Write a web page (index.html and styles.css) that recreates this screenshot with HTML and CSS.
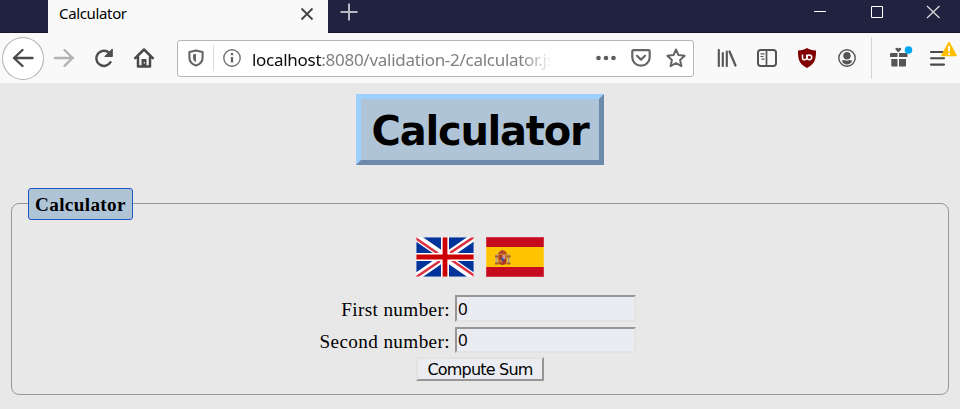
FILE: index.html
```
<!DOCTYPE html>
<html lang="en">
<head>
<meta charset="utf-8">
<title>Calculator</title>
<link rel="stylesheet" href="styles.css">
</head>
<body>
<header class="tabbar">
  <div class="tab">
    <span class="tab-title">Calculator</span>
    <svg class="tab-close" width="14" height="14" viewBox="0 0 14 14"><path d="M1.5 1.5l11 11M12.5 1.5l-11 11" stroke="#444" stroke-width="1.8"/></svg>
  </div>
  <svg class="new-tab" width="18" height="18" viewBox="0 0 18 18"><path d="M9 .5v17M.5 9h17" stroke="#b9b9c6" stroke-width="2"/></svg>
  <div class="window-controls">
    <svg width="57" height="33" viewBox="0 0 57 33"><path d="M22 11.5h12" stroke="#fff"/></svg>
    <svg width="57" height="33" viewBox="0 0 57 33"><path d="M22.500 6.500h11v11h-11z" fill="none" stroke="#fff"/></svg>
    <svg width="57" height="33" viewBox="0 0 57 33"><path d="M21 6l12.500 12M33.500 6L21 18" stroke="#ddd" stroke-width="1.200"/></svg>
  </div>
</header>
<nav class="toolbar">
  <div class="back"><svg width="22" height="20" viewBox="0 0 22 20"><path d="M20.500 10H2M10.500 2L2 10l8.500 8" fill="none" stroke="#4a4a4a" stroke-width="2.400" stroke-linecap="round" stroke-linejoin="round"/></svg></div>
  <div class="tool"><svg width="22" height="20" viewBox="0 0 22 20"><path d="M2 10h18M11.500 2l8 8-8 8" fill="none" stroke="#b3b3b3" stroke-width="2.400" stroke-linecap="round" stroke-linejoin="round"/></svg></div>
  <div class="tool"><svg width="20" height="20" viewBox="0 0 20 20"><path d="M16.500 14.200A7.600 7.600 0 1 1 15.200 4.800" fill="none" stroke="#4d4d4d" stroke-width="2.500" stroke-linecap="round"/><path d="M18.300 1v7.500h-7.500z" fill="#4d4d4d" stroke="#4d4d4d" stroke-linejoin="round"/></svg></div>
  <div class="tool"><svg width="20" height="20" viewBox="0 0 20 20"><path d="M1.200 10.200L10 1.500l8.800 8.700M4 9v9.500h12V9" fill="none" stroke="#4a4a4a" stroke-width="2.500" stroke-linecap="round" stroke-linejoin="round"/><path d="M7.500 11h5v8h-5z" fill="#4a4a4a"/><path d="M9.700 14h1.300v1.500H9.700z" fill="#ddd"/></svg></div>
  <div class="urlbar">
    <svg class="shield" width="16" height="18" viewBox="0 0 16 18"><path d="M8 1.400l6.600 1.700v5.400c0 4-2.800 6.800-6.600 8.100-3.800-1.300-6.600-4.100-6.600-8.100V3.100z" fill="none" stroke="#666" stroke-width="2.100" stroke-linejoin="round"/><path d="M8 4.700v8.600C5.700 12 5 10.500 5 8.500v-3z" fill="#666"/></svg>
    <span class="url-divider"></span>
    <svg class="info" width="18" height="18" viewBox="0 0 18 18"><circle cx="9" cy="9" r="8.200" fill="none" stroke="#737373" stroke-width="1.400"/><path d="M9 8v5.500" stroke="#666" stroke-width="2.300"/><circle cx="9" cy="5.100" r="1.300" fill="#666"/></svg>
    <span class="url"><span class="host">localhost</span>:8080/validation-2/calculator.js</span>
    <svg class="dots" width="20" height="6" viewBox="0 0 20 6"><g fill="#5d5d5d"><circle cx="2.500" cy="3" r="2.300"/><circle cx="10" cy="3" r="2.300"/><circle cx="17.500" cy="3" r="2.300"/></g></svg>
    <svg class="pocket" width="20" height="18" viewBox="0 0 20 18"><path d="M2.500 1.200h15q1.200 0 1.200 1.200v5.800a8.700 8.500 0 0 1-17.400 0V2.400q0-1.200 1.200-1.200z" fill="none" stroke="#666" stroke-width="2.200"/><path d="M6 6.800l4 3.800 4-3.800" fill="none" stroke="#666" stroke-width="2.200" stroke-linecap="round" stroke-linejoin="round"/></svg>
    <svg class="star" width="20" height="20" viewBox="0 0 20 20"><path d="M10 1.500l2.500 5.600 6.200.7-4.600 4.200 1.300 6.200-5.400-3.200-5.400 3.200L5.900 12 1.300 7.800l6.200-.7z" fill="none" stroke="#666" stroke-width="2" stroke-linejoin="round"/></svg>
  </div>
  <div class="actions">
    <div class="tool"><svg width="20" height="18" viewBox="0 0 20 18"><path d="M1.800 1v16M5.800 4v13M9.800 2.500V17" stroke="#555" stroke-width="2.100" stroke-linecap="round"/><path d="M12.500 2.500l6 14" stroke="#555" stroke-width="2.200" stroke-linecap="round"/></svg></div>
    <div class="tool"><svg width="20" height="18" viewBox="0 0 20 18"><rect x="1" y="1" width="18" height="16" rx="2.700" fill="none" stroke="#555" stroke-width="2"/><path d="M9.500 1v16" stroke="#555" stroke-width="1.700"/><path d="M3.500 4.800h4M3.500 7.500h3M4.500 10.200h3" stroke="#555" stroke-width="1.200"/></svg></div>
    <div class="tool"><svg width="18" height="20" viewBox="0 0 18 20"><path d="M9 0c2.500 1.800 5 2.200 9 2.500 0 8-.5 13.300-9 17.500C.5 15.800 0 10.500 0 2.500 4 2.200 6.500 1.800 9 0z" fill="#800000"/><path d="M4.500 6.500v3.200a2.100 2.100 0 0 0 4.200 0V6.500" fill="none" stroke="#fff" stroke-width="1.500"/><circle cx="11.300" cy="9.300" r="2.400" fill="none" stroke="#fff" stroke-width="1.500"/></svg></div>
    <div class="tool"><svg width="18" height="18" viewBox="0 0 18 18"><circle cx="9" cy="9" r="8.200" fill="none" stroke="#555" stroke-width="1.400"/><circle cx="9" cy="6.700" r="3.700" fill="#555"/><path d="M3.700 11.400c1 .2 1.900-.2 2.700-.5 1.700 1 3.500 1 5.200 0 .8.300 1.700.7 2.700.5-1 2.800-3 4-5.300 4s-4.300-1.200-5.300-4z" fill="#555"/></svg></div>
    <span class="separator"></span>
    <div class="tool gift"><svg width="24" height="22" viewBox="0 0 24 22"><path d="M1 8q0-1 1-1h6.500v4H1zM10 7h7q1.500 0 1.500 1v3H10zM2.300 13h6.200v7.500H3.300q-1 0-1-1zM10 13h7v6.500q0 1-1 1h-6z" fill="#555"/><path d="M9.300 6.500L6.500 3.400q-.5-1.700 1-1.700 1.300 0 1.800 1 .5-1 1.800-1 1.500 0 1 1.700z" fill="#555"/><circle cx="19.500" cy="4" r="3.800" fill="#00a7f5"/></svg></div>
    <div class="tool menu"><svg width="28" height="26" viewBox="0 0 28 26"><path d="M2 11h13M2 17.300h13M2 23.600h13" stroke="#4a4a4a" stroke-width="2.100" stroke-linecap="round"/><path d="M20 2l6.700 12.300H13.300z" fill="#ffbf00" stroke="#ffbf00" stroke-width="2" stroke-linejoin="round"/><path d="M20 5v5.500M20 12v2" stroke="#fff" stroke-width="1.800"/></svg></div>
  </div>
</nav>
<main class="page">
  <h1>Calculator</h1>
  <fieldset>
    <legend>Calculator</legend>
    <div class="flags">
      <svg width="58" height="40" viewBox="0 0 58 40"><path fill="#039" d="M0 0h58v40H0z"/><path d="M0 0l58 40M58 0L0 40" stroke="#fff" stroke-width="7.500"/><path d="M-1 .8L24 18M34 22l25 17.200M59-.8L34 16M24 24L-1 41" stroke="#dc3040" stroke-width="2.500"/><path d="M29 0v40M0 20h58" stroke="#fff" stroke-width="8"/><path d="M29 0v40M0 20h58" stroke="#c00" stroke-width="4.800"/><path d="M.5.5h57v39H.5z" fill="none" stroke="#fff" stroke-opacity=".4"/></svg>
      <svg width="58" height="40" viewBox="0 0 58 40"><path fill="#c60b1e" d="M0 0h58v40H0z"/><path fill="#ffc400" d="M0 10h58v20H0z"/><path d="M10.500 17v9M22.500 17v9" stroke="#b6a08a" stroke-width="2"/><path d="M9 19.500h3.500M21 19.500h3.500M9 26.500h4M20.500 26.500h4" stroke="#a3602a" stroke-width="1.800"/><path d="M12.500 18h8v6q0 4-4 4t-4-4z" fill="#aa3929"/><path d="M12 17.500q0-3 4.500-4.500 4.500 1.500 4.500 4.500z" fill="#b54829"/><path d="M16.500 18h3v4h-3z" fill="#c99aa0"/><path d="M13 23h3v3q-2-.5-3-2z" fill="#d9822b"/><circle cx="16.500" cy="22.500" r="1.500" fill="#385b9b"/><path d="M.5.5h57v39H.5z" fill="none" stroke="#fff" stroke-opacity=".18"/></svg>
    </div>
    <form class="form">
      <label for="first">First number:</label>
      <input id="first" class="first" type="text" value="0">
      <label for="second">Second number:</label>
      <input id="second" type="text" value="0">
    </form>
    <button type="button"><span>Compute Sum</span></button>
  </fieldset>
</main>
</body>
</html>
```
FILE: styles.css
```
* { box-sizing: border-box; }
html, body { height: 100%; }
body {
  margin: 0;
  background: #e8e8e8;
  color: #000;
  font-family: "Liberation Serif", serif;
  overflow: hidden;
}
svg { display: block; flex: none; }

.tabbar {
  display: flex;
  height: 33px;
  padding-left: 48px;
  background: #202340;
  border-bottom: 1px solid #15172e;
}
.tab {
  display: flex;
  align-items: flex-start;
  justify-content: space-between;
  width: 280px;
  height: 33px;
  padding: 4px 14px 0 11px;
  background: #f9f9f9;
}
.tab-title {
  font: 15px/18px "Noto Sans", sans-serif;
  letter-spacing: -0.35px;
}
.tab-close { margin-top: 3px; }
.new-tab { margin: 3px 0 0 12px; }
.window-controls { display: flex; margin-left: auto; margin-right: -3px; }

.toolbar {
  display: flex;
  align-items: center;
  height: 50px;
  padding-left: 2px;
  background: #f9f9f9;
}
.back {
  display: grid;
  place-items: center;
  width: 42px;
  height: 43px;
  border: 1px solid #b1b1b1;
  border-radius: 50%;
  background: #fff;
}
.tool {
  display: grid;
  place-items: center;
  flex: none;
  width: 40px;
  height: 40px;
}
.urlbar {
  display: flex;
  align-items: center;
  flex: none;
  width: 517px;
  height: 37px;
  margin-left: 13px;
  padding: 0 6px 0 10px;
  border: 1px solid #b5b5b5;
  border-radius: 3px;
  background: #fff;
}
.url-divider { width: 1px; height: 26px; margin: 0 9px 0 9px; background: #dcdcdc; }
.url {
  width: 300px;
  margin: 4px 0 0 11px;
  white-space: nowrap;
  color: #808080;
  font: 17px/24px "Noto Sans", sans-serif;
  letter-spacing: -0.28px;
  -webkit-mask-image: linear-gradient(to right, #000 270px, transparent 300px);
  mask-image: linear-gradient(to right, #000 270px, transparent 300px);
}
.host { color: #0c0c0d; }
.dots { margin-left: 44px; }
.pocket { margin-left: 15px; }
.star { margin-left: 15px; }
.actions { display: flex; align-items: center; margin-left: 13px; }
.separator { width: 1px; height: 42px; margin: 0 7px 0 4px; background: #d4d4d4; }
.gift svg { margin: -3px -3px 0 0; }
.menu svg { margin: -9px -7px 0 0; }

.page { display: flex; flex-direction: column; align-items: center; padding: 11px 11px 0; }
h1 {
  width: 248px;
  height: 71px;
  margin: 0;
  border: 5px solid;
  border-color: #9dcfff #6c8baa #6c8baa #9dcfff;
  background: #b0c4d8;
  font: bold 40px/64px "DejaVu Sans", sans-serif;
  letter-spacing: -1.25px;
  text-align: center;
}
fieldset {
  width: 938px;
  height: 207px;
  margin: 22.9px 0 0;
  padding: 0 16px;
  border: 1px solid #969696;
  border-radius: 8px;
}
legend {
  width: 105px;
  height: 32px;
  padding: 0 0 0 6px;
  border: 1px solid #1c59c6;
  border-radius: 3px;
  background: #b0c4d8;
  font-size: 19.2px;
  letter-spacing: 0.35px;
  font-weight: bold;
  line-height: 32px;
}
.flags { display: flex; justify-content: center; gap: 12px; padding-top: 17px; }
.form {
  display: grid;
  grid-template-columns: 131px 181px;
  column-gap: 5px;
  row-gap: 5px;
  justify-content: start;
  margin: 18px 0 0 291px;
}
label {
  height: 26px;
  font-size: 19.2px;
  letter-spacing: 0.38px;
  line-height: 29px;
  text-align: right;
  white-space: nowrap;
}
input {
  width: 181px;
  height: 26px;
  padding: 0 0 0 1px;
  border: 2px solid;
  border-color: #969696 #e3e3e3 #e3e3e3 #969696;
  border-radius: 0;
  background: #ebecf2;
  color: #000;
  font: 17px/22px "Noto Sans", sans-serif;
}
.first { height: 27px; }
button {
  display: block;
  width: 128px;
  height: 24px;
  margin: 4px auto 0;
  padding: 2px 0 0;
  border: 2px solid;
  border-color: #e3e3e3 #969696 #969696 #e3e3e3;
  border-radius: 0;
  background: #ebecf2;
  color: #000;
  font: 16px/18px "DejaVu Sans", sans-serif;
  letter-spacing: -0.8px;
  white-space: nowrap;
}
```
